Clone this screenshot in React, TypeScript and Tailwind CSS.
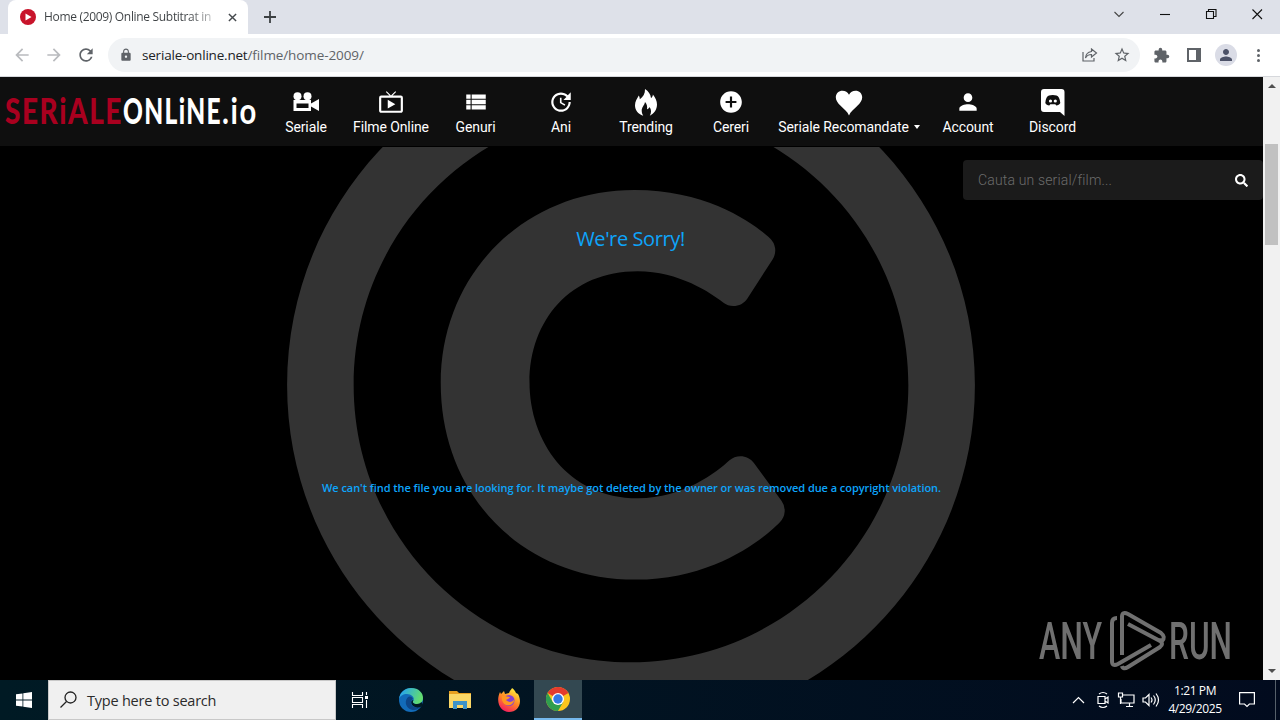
import {
  MdAddCircle,
  MdArrowBack,
  MdArrowForward,
  MdExtension,
  MdLiveTv,
  MdLock,
  MdPerson,
  MdRefresh,
  MdStarOutline,
  MdUpdate,
  MdViewList,
} from "react-icons/md";
import { FaRegCopyright, FaSearch } from "react-icons/fa";

const CameraIcon = () => (
  <svg viewBox="0 0 27 20" className="w-[27px] h-5" fill="#fff">
    <circle cx="4.500" cy="4.2" r="4" />
    <circle cx="14.500" cy="4.2" r="4" />
    <path
      fillRule="evenodd"
      d="M.5 8H18v3.500L26 7v12l-8-4.500V19H.5zM3.500 11.500v4.500h12v-4.500z"
    />
  </svg>
);

const FlameIcon = () => (
  <svg viewBox="0 0 24 27" className="w-6 h-[27px]" fill="#fff">
    <path d="M11 0c3.500 2.300 5.500 5.200 6 9 1.200-.8 1.800-2 1.900-3.600C21.500 9 23 12 23 15.500c0 5-2.800 9-7.200 11.300 1.700-3 1.700-6.300-.3-8.800-.6 1.400-1.400 2-2.500 2.300.5-3-.2-5.300-2-7.300-.2 3-3 4.600-3.300 7.800-.1 2.200.4 4.200 1.500 6C4 24.700 1 21.200 1 16.200 1 12.500 3.200 9.500 4.800 6.500c.7 1.200 1 2.400 1 3.800C9.200 7.800 11.200 4.500 11 0z" />
  </svg>
);

const HeartIcon = () => (
  <svg viewBox="0 0 28 26" className="w-7 h-[26px] mt-0.5" fill="#fff">
    <path d="M14 25.500C12.500 21.500 9 19.200 5.600 15.800 2.600 12.900.8 10.500.8 7.300.8 3.500 3.800.8 7.500.8c2.800 0 5.200 1.500 6.500 3.900C15.300 2.300 17.700.8 20.500.8c3.700 0 6.700 2.700 6.700 6.500 0 3.200-1.800 5.600-4.800 8.500C19 19.200 15.500 21.500 14 25.500z" />
  </svg>
);

const DiscordIcon = () => (
  <svg viewBox="0 0 24 27" className="w-6 h-[27px]">
    <path
      fill="#fff"
      d="M3 0h17.500a3 3 0 0 1 3 3v24l-4.500-4H3a3 3 0 0 1-3-3V3a3 3 0 0 1 3-3z"
    />
    <path
      fill="#0f0f0f"
      d="M8 6.500c2-.8 5.500-.8 7.500 0 2 .5 3.300 3 3.800 7.500-.7 1.600-2.300 2.500-4 2.500l-1-1.300h-5L8.300 16.500c-1.800 0-3.300-.9-4-2.500.4-4.500 1.700-7 3.700-7.500z"
    />
    <circle cx="9.500" cy="12" r="1.600" fill="#fff" />
    <circle cx="14.300" cy="12" r="1.600" fill="#fff" />
  </svg>
);

const links = [
  { label: "Seriale", width: "w-[68px]", icon: <CameraIcon /> },
  { label: "Filme Online", width: "w-[102px]", icon: <MdLiveTv size={26} /> },
  { label: "Genuri", width: "w-[67px]", icon: <MdViewList size={26} /> },
  { label: "Ani", width: "w-[104px]", icon: <MdUpdate size={26} /> },
  { label: "Trending", width: "w-[66px]", icon: <FlameIcon /> },
  { label: "Cereri", width: "w-[104px]", icon: <MdAddCircle size={26} /> },
  { label: "Seriale Recomandate", width: "w-[132px]", icon: <HeartIcon /> },
  { label: "Account", width: "w-[106px]", icon: <MdPerson size={26} /> },
  { label: "Discord", width: "w-[63px]", icon: <DiscordIcon /> },
];

const TabStrip = () => (
  <div className="flex h-[34px] bg-[#dee1e9]">
    <div className="flex items-center w-60 ml-2 pl-3 bg-white rounded-t-lg">
      <svg viewBox="0 0 16 16" className="w-4 h-4 shrink-0">
        <circle cx="8" cy="8" r="8" fill="#c8142b" />
        <path d="M5.500 4.500v7l6-3.500z" fill="#fff" />
      </svg>
      <p className="w-[170px] ml-2 whitespace-nowrap text-[12px] tracking-[-0.320px] bg-linear-to-r from-[#3c4043] from-85% to-[#3c404340] bg-clip-text text-transparent">
        Home (2009) Online Subtitrat in
      </p>
      <svg viewBox="0 0 10 10" className="w-[9px] h-[9px] ml-[14px]" stroke="#45494d" strokeWidth="1.6">
        <path d="M1 1l8 8M9 1L1 9" />
      </svg>
    </div>
    <svg viewBox="0 0 12 12" className="w-3 h-3 ml-4 mt-[11px]" stroke="#3c4043" strokeWidth="1.8">
      <path d="M6 0v12M0 6h12" />
    </svg>
    <svg viewBox="0 0 150 12" className="w-[150px] h-3 mt-2 mr-4 ml-auto" fill="none" stroke="#111" strokeWidth="1.1">
      <path d="M.5 4l4.500 4.500L9.500 4" stroke="#444" />
      <path d="M46 6.500h10" />
      <path d="M92.500 3.500h7v7h-7zM94.500 3.500v-2h7.500v7h-2.500" />
      <path d="M138.500 1.500l9.500 9.500M148 1.500L138.500 11" />
    </svg>
  </div>
);

const AddressBar = () => (
  <div className="flex items-center h-[43px] bg-white border-b border-[#d6d8dc] text-[#5f6368]">
    <MdArrowBack size={20} className="ml-3 text-[#b9bbbe]" />
    <MdArrowForward size={20} className="ml-3 text-[#b9bbbe]" />
    <MdRefresh size={20} className="ml-3" />
    <div className="flex items-center w-[1032px] h-[34px] ml-3 rounded-full bg-[#f1f3f5]">
      <MdLock size={14} className="ml-[11px]" />
      <p className="ml-[9px] text-[13.500px] text-[#5f6368]">
        <span className="text-[#202124] tracking-[-0.200px]">seriale-online.net</span>
        <span className="tracking-[-0.100px]">/filme/home-2009/</span>
      </p>
      <svg viewBox="0 0 16 14" className="w-4 h-3.5 ml-auto" fill="none" stroke="#5f6368" strokeWidth="1.2">
        <path d="M1 4v9h11v-3M9.500 1l5 4-5 4V6.500C6.500 6.500 4.500 8 3.500 10c.3-4 2.500-6 6-6.500z" />
      </svg>
      <MdStarOutline size={18} className="ml-[15px] mr-[9px]" />
    </div>
    <MdExtension size={17} className="ml-[13px]" />
    <svg viewBox="0 0 14 14" className="w-3.5 h-3.5 ml-[17px]" fill="#5f6368">
      <path fillRule="evenodd" d="M0 0h14v14H0zM2 2v10h7V2z" />
    </svg>
    <div className="flex items-center justify-center w-[22px] h-[22px] ml-3.5 rounded-full bg-[#dadce6] text-[#4c5268]">
      <MdPerson size={18} />
    </div>
    <div className="flex flex-col gap-[2px] ml-5">
      <i className="w-[3px] h-[3px] rounded-full bg-[#5f6368]" />
      <i className="w-[3px] h-[3px] rounded-full bg-[#5f6368]" />
      <i className="w-[3px] h-[3px] rounded-full bg-[#5f6368]" />
    </div>
  </div>
);

const Logo = () => (
  <h1 className="w-[272px] pt-1 pl-1">
    <svg
      viewBox="0 0 264 60"
      className="w-[264px] h-[60px]"
      fontFamily="Lato, sans-serif"
      fontSize="36"
      fontWeight="900"
      letterSpacing="2"
    >
      <text x="1" y="43" fill="#a9001f" textLength="118" lengthAdjust="spacingAndGlyphs">
        SERiALE
      </text>
      <text x="119" y="43" fill="#fff" textLength="99" lengthAdjust="spacingAndGlyphs">
        ONLiNE
      </text>
      <text x="218" y="43" fill="#fff" fontWeight="700" textLength="36" lengthAdjust="spacingAndGlyphs">
        .io
      </text>
    </svg>
  </h1>
);

const NavBar = () => (
  <nav className="relative flex h-[70px] bg-[#0f0f0f] border-b border-black text-white">
    <Logo />
    {links.map((link) => (
      <a key={link.label} className={`flex flex-col items-center shrink-0 pt-[10px] ${link.width}`}>
        <span className="flex items-center justify-center h-[30px]">{link.icon}</span>
        <span className="flex items-center text-[14px] leading-5 tracking-[-0.100px] whitespace-nowrap">
          {link.label}
          {link.label === "Seriale Recomandate" && (
            <i className="ml-[5px] border-x-[3.500px] border-x-transparent border-t-4 border-t-white" />
          )}
        </span>
      </a>
    ))}
  </nav>
);

const AnyRun = () => (
  <div className="absolute right-[29px] bottom-0.5 opacity-60">
    <svg viewBox="0 -3 196 72" className="w-[196px] h-[72px]" fill="none" stroke="#bbb" strokeWidth="4">
      <g fontFamily="Roboto, sans-serif" fontSize="52" fontWeight="500" fill="#bbb" stroke="none">
        <text x="1" y="50" textLength="63" lengthAdjust="spacingAndGlyphs">ANY</text>
        <text x="131" y="50" textLength="63" lengthAdjust="spacingAndGlyphs">RUN</text>
      </g>
      <path d="M79 9q-5 0-5 5v38q0 6 6 3l33-19M84 46V8q0-6 6-3l33 19q5 4 1 8l-3-1M90 15l32 17q4 3 0 6L90 58q-5 3-6-1" />
    </svg>
  </div>
);

const Page = () => (
  <main className="relative w-[1263px] h-[603px] overflow-hidden bg-black font-[Roboto,sans-serif]">
    <FaRegCopyright className="absolute left-[276px] top-[-47.500px] w-[710px] h-[710px] text-[#333]" />
    <NavBar />
    <div className="relative flex justify-end pt-[13px]">
      <div className="flex items-center justify-between w-[300px] h-10 pl-[15px] pr-[15px] rounded bg-[#1b1b1b]">
        <span className="text-[14px] text-[#6c6c6c] font-light tracking-[0.160px]">Cauta un serial/film...</span>
        <FaSearch size={13} className="text-white" />
      </div>
    </div>
    <div className="relative text-center text-[#0da5fb] font-['Open_Sans',sans-serif]">
      <h2 className="mt-6 mr-0.5 text-[20px] leading-[30px] font-medium tracking-[-0.400px]">We're Sorry!</h2>
      <p className="mt-[224px] text-[11px] leading-5 font-semibold tracking-[-0.055px]">
        We can't find the file you are looking for. It maybe got deleted by the owner or was removed due a copyright violation.
      </p>
    </div>
    <AnyRun />
  </main>
);

const Scrollbar = () => (
  <div className="flex flex-col items-center justify-between w-[17px] bg-[#f1f1f1] pt-[7px] pb-[7px]">
    <i className="border-x-4 border-x-transparent border-b-4 border-b-[#505050]" />
    <div className="w-[13px] h-[101px] mt-14 mb-auto bg-[#c1c1c1]" />
    <i className="border-x-4 border-x-transparent border-t-4 border-t-[#505050]" />
  </div>
);

const EdgeIcon = () => (
  <svg viewBox="0 0 24 24" className="w-6 h-6">
    <defs>
      <linearGradient id="edge" x1="0" y1="0" x2="1" y2="0.300">
        <stop offset="0.2" stopColor="#2ba9e4" />
        <stop offset="1" stopColor="#62dc70" />
      </linearGradient>
    </defs>
    <circle cx="12" cy="12" r="12" fill="#126bb9" />
    <path d="M0 11C1 4 6 0 12 0c8 0 12 5 12 10 0 4-3 6-6 6-4 0-5-2-3.500-3.500C16 9 12 6 8 6c-4 0-7 2-8 5z" fill="url(#edge)" />
    <path d="M10 8.500c-5 3-4 11 2 13 4 1.500 7 0 10-3-5 2-11 0-10-5 .2-1 .8-2 2-2.500-.7-1.700-2-2.500-4-2.500z" fill="#0d4688" />
    <path d="M14.500 12.500c-1.500 1.500-.5 3.500 3.500 3.500 2 0 3.500-.7 4.500-2L24 17l-2.500 2c-5 1.500-9-1-9.300-4.500 0-1.500.8-3 2.300-2z" fill="#001a24" />
  </svg>
);

const FolderIcon = () => (
  <svg viewBox="0 0 22 20" className="w-[22px] h-5">
    <path d="M0 1h8l2 2h12v4H0z" fill="#e8a020" />
    <path d="M0 4h22v14H0z" fill="#fbd766" />
    <path d="M4 19v-8h14v8h-4v-4H8v4z" fill="#3d93c8" />
  </svg>
);

const FirefoxIcon = () => (
  <svg viewBox="0 0 24 24" className="w-6 h-6">
    <defs>
      <linearGradient id="fox" x1="0.800" y1="0" x2="0.300" y2="1">
        <stop offset="0.1" stopColor="#ffe23c" />
        <stop offset="0.5" stopColor="#ff8a25" />
        <stop offset="1" stopColor="#f5195f" />
      </linearGradient>
    </defs>
    <path d="M3 4l1 2 3-3 1 3 4-1c1-3 3-4 3-5 2 1 3 3 4 5l2 1c5 9 0 18-9 18C4 24-2 15 3 4z" fill="url(#fox)" />
    <circle cx="12" cy="12.500" r="5.500" fill="#8642d2" />
    <path d="M5 8c3-1 5 1 8 1-1 2-3 2-4 3 2 2 5 3 8 0 0 4-4 6-8 5-3-1-5-5-4-9z" fill="#ff9620" />
  </svg>
);

const ChromeIcon = () => (
  <svg viewBox="0 0 24 24" className="w-6 h-6">
    <circle cx="12" cy="12" r="12" fill="#fbc51d" />
    <path d="M12 12L1.600 6A12 12 0 0 1 22.400 6z" fill="#e33b2e" />
    <path d="M1.600 6A12 12 0 0 0 12 24l5.200-9L12 12 6.800 15z" fill="#2f9e4f" />
    <circle cx="12" cy="12" r="6" fill="#fff" />
    <circle cx="12" cy="12" r="4.700" fill="#3479e5" />
  </svg>
);

const Taskbar = () => (
  <footer className="flex h-10 bg-linear-to-r from-[#001a24] to-[#020b1e] text-white">
    <div className="flex items-center justify-center w-12">
      <svg viewBox="0 0 16 16" className="w-4 h-4" fill="#fff">
        <path d="M0 2.300L6.500 1.400v6.200H0zM7.300 1.300L16 0v7.600H7.300zM0 8.400h6.500v6.200L0 13.700zM7.300 8.400H16V16l-8.700-1.300z" />
      </svg>
    </div>
    <div className="flex items-center w-72 pl-[11px] bg-[#f0f0f0] border border-[#c8c8c8] text-[#2b2b2b]">
      <svg viewBox="0 0 18 18" className="w-[18px] h-[18px]" fill="none" stroke="#222" strokeWidth="1.3">
        <circle cx="10.500" cy="6.500" r="5.500" />
        <path d="M6.500 10.500L.5 16.500" />
      </svg>
      <p className="ml-[9px] pt-0.5 text-[14.500px] tracking-[-0.220px]">Type here to search</p>
    </div>
    <div className="flex items-center justify-center w-12">
      <svg viewBox="0 0 18 16" className="w-[18px] h-4" fill="none" stroke="#fff" strokeWidth="1.1">
        <path d="M1.500 0v3.500h10V0M1.500 16v-3.500h10V16M1.500 5.500h10v5h-10zM15.500 0v3M15.500 8v8" />
        <path d="M14 4h3v3h-3z" fill="#fff" stroke="none" />
      </svg>
    </div>
    <div className="flex items-center justify-center w-[54px]"><EdgeIcon /></div>
    <div className="flex items-center justify-center w-11"><FolderIcon /></div>
    <div className="flex items-center justify-center w-[54px]"><FirefoxIcon /></div>
    <div className="flex items-center justify-center w-12 -ml-0.5 bg-[#334851] border-b-2 border-[#76b9ed]"><ChromeIcon /></div>
    <svg viewBox="0 0 88 18" className="w-[88px] h-[18px] ml-auto mt-[11px]" fill="none" stroke="#fff" strokeWidth="1.2">
      <path d="M1 12l5.500-5.500L12 12" />
      <path d="M26 5.500h7v7h-7zM33 8l3-2v6l-3-2M27 3q4-3 8 0M27 15q4 3 8 0" />
      <path d="M51 4h11v8H49V8M54 15.500h7M57.500 12v3.500M46.500 2h4v4h-4zM48.500 6v7" />
      <path d="M71 7h2.500L77 3.500v11L73.500 11H71zM79 6.500q2 2.500 0 5M81.500 4.500q3.500 4.500 0 9M84 2.500q5 6.500 0 13" />
    </svg>
    <div className="w-[68px] ml-[1px] pt-[2px] text-center text-[12px] leading-[18px] tracking-[-0.400px]">
      <p>1:21 PM</p>
      <p>4/29/2025</p>
    </div>
    <svg viewBox="0 0 16 16" className="w-4 h-4 ml-[10px] mt-3 mr-5" fill="none" stroke="#fff" strokeWidth="1.2">
      <path d="M.6.600h14.800v11.400h-5L8 14.500 5.500 12H.600z" />
    </svg>
    <div className="w-[5px] border-l border-[#56606a]" />
  </footer>
);

const App = () => {
  return (
    <div className="w-[1280px] h-[720px] overflow-hidden font-['Open_Sans',sans-serif]">
      <TabStrip />
      <AddressBar />
      <div className="flex h-[603px]">
        <Page />
        <Scrollbar />
      </div>
      <Taskbar />
    </div>
  );
};

export default App;
